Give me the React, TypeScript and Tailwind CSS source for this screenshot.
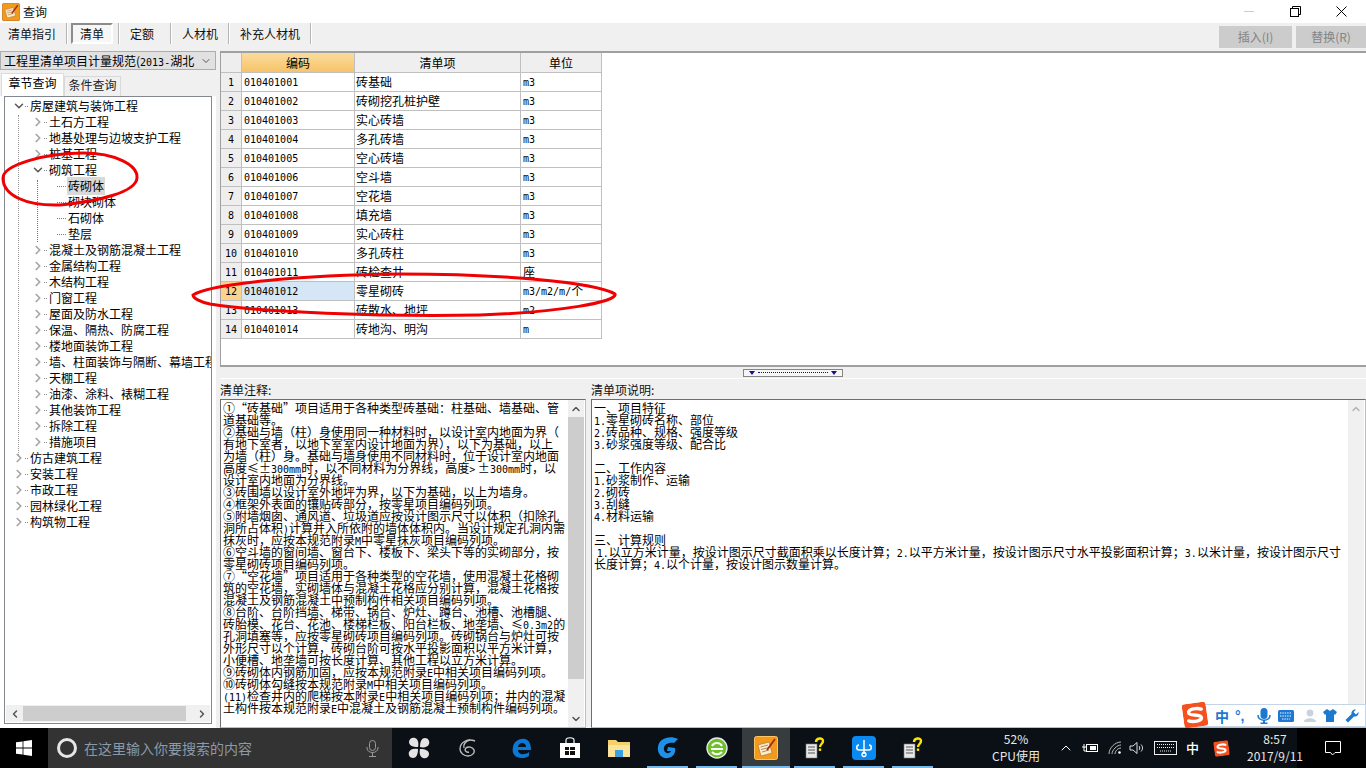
import type { ReactNode } from "react";
import { ChevronDown, ChevronRight, ChevronUp, ChevronLeft } from "lucide-react";

const rows = [
  ["010401001", "砖基础", "m3"],
  ["010401002", "砖砌挖孔桩护壁", "m3"],
  ["010401003", "实心砖墙", "m3"],
  ["010401004", "多孔砖墙", "m3"],
  ["010401005", "空心砖墙", "m3"],
  ["010401006", "空斗墙", "m3"],
  ["010401007", "空花墙", "m3"],
  ["010401008", "填充墙", "m3"],
  ["010401009", "实心砖柱", "m3"],
  ["010401010", "多孔砖柱", "m3"],
  ["010401011", "砖检查井", "座"],
  ["010401012", "零星砌砖", "m3/m2/m/个"],
  ["010401013", "砖散水、地坪", "m2"],
  ["010401014", "砖地沟、明沟", "m"],
];

const notes = [
  "①“砖基础”项目适用于各种类型砖基础：柱基础、墙基础、管",
  "道基础等。",
  "②基础与墙（柱）身使用同一种材料时，以设计室内地面为界（",
  "有地下室者，以地下室室内设计地面为界），以下为基础，以上",
  "为墙（柱）身。基础与墙身使用不同材料时，位于设计室内地面",
  "高度≤±300mm时，以不同材料为分界线，高度> ±300mm时，以",
  "设计室内地面为分界线。",
  "③砖围墙以设计室外地坪为界，以下为基础，以上为墙身。",
  "④框架外表面的镶贴砖部分，按零星项目编码列项。",
  "⑤附墙烟囱、通风道、垃圾道应按设计图示尺寸以体积（扣除孔",
  "洞所占体积)计算并入所依附的墙体体积内。当设计规定孔洞内需",
  "抹灰时，应按本规范附录M中零星抹灰项目编码列项。",
  "⑥空斗墙的窗间墙、窗台下、楼板下、梁头下等的实砌部分，按",
  "零星砌砖项目编码列项。",
  "⑦“空花墙”项目适用于各种类型的空花墙，使用混凝土花格砌",
  "筑的空花墙，实砌墙体与混凝土花格应分别计算，混凝土花格按",
  "混凝土及钢筋混凝土中预制构件相关项目编码列项。",
  "⑧台阶、台阶挡墙、梯带、锅台、炉灶、蹲台、池槽、池槽腿、",
  "砖胎模、花台、花池、楼梯栏板、阳台栏板、地垄墙、≤0.3m2的",
  "孔洞填塞等，应按零星砌砖项目编码列项。砖砌锅台与炉灶可按",
  "外形尺寸以个计算，砖砌台阶可按水平投影面积以平方米计算，",
  "小便槽、地垄墙可按长度计算、其他工程以立方米计算。",
  "⑨砖砌体内钢筋加固，应按本规范附录E中相关项目编码列项。",
  "⑩砖砌体勾缝按本规范附录M中相关项目编码列项。",
  "(11)检查井内的爬梯按本附录E中相关项目编码列项；井内的混凝",
  "土构件按本规范附录E中混凝土及钢筋混凝土预制构件编码列项。",
];

const explain = [
  "一、项目特征",
  "1.零星砌砖名称、部位",
  "2.砖品种、规格、强度等级",
  "3.砂浆强度等级、配合比",
  " ",
  "二、工作内容",
  "1.砂浆制作、运输",
  "2.砌砖",
  "3.刮缝",
  "4.材料运输",
  " ",
  "三、计算规则",
  " 1.以立方米计量，按设计图示尺寸截面积乘以长度计算；2.以平方米计量，按设计图示尺寸水平投影面积计算；3.以米计量，按设计图示尺寸",
  "长度计算；4.以个计量，按设计图示数量计算。",
];

type Node = { t: string; level: number; icon?: "open" | "closed"; leaf?: boolean; sel?: boolean };

const tree: Node[] = [
  { t: "房屋建筑与装饰工程", level: 0, icon: "open" },
  { t: "土石方工程", level: 1, icon: "closed" },
  { t: "地基处理与边坡支护工程", level: 1, icon: "closed" },
  { t: "桩基工程", level: 1, icon: "closed" },
  { t: "砌筑工程", level: 1, icon: "open" },
  { t: "砖砌体", level: 2, leaf: true, sel: true },
  { t: "砌块砌体", level: 2, leaf: true },
  { t: "石砌体", level: 2, leaf: true },
  { t: "垫层", level: 2, leaf: true },
  { t: "混凝土及钢筋混凝土工程", level: 1, icon: "closed" },
  { t: "金属结构工程", level: 1, icon: "closed" },
  { t: "木结构工程", level: 1, icon: "closed" },
  { t: "门窗工程", level: 1, icon: "closed" },
  { t: "屋面及防水工程", level: 1, icon: "closed" },
  { t: "保温、隔热、防腐工程", level: 1, icon: "closed" },
  { t: "楼地面装饰工程", level: 1, icon: "closed" },
  { t: "墙、柱面装饰与隔断、幕墙工程", level: 1, icon: "closed" },
  { t: "天棚工程", level: 1, icon: "closed" },
  { t: "油漆、涂料、裱糊工程", level: 1, icon: "closed" },
  { t: "其他装饰工程", level: 1, icon: "closed" },
  { t: "拆除工程", level: 1, icon: "closed" },
  { t: "措施项目", level: 1, icon: "closed" },
  { t: "仿古建筑工程", level: 0, icon: "closed" },
  { t: "安装工程", level: 0, icon: "closed" },
  { t: "市政工程", level: 0, icon: "closed" },
  { t: "园林绿化工程", level: 0, icon: "closed" },
  { t: "构筑物工程", level: 0, icon: "closed" },
];

// SimSun has half-width latin, so ascii runs get a 6px-wide mono
function Txt({ s }: { s: string }) {
  const parts = s.split(/([\x21-\x7e]+)/);
  return (
    <>
      {parts.map((p, i) =>
        /^[\x21-\x7e]+$/.test(p) ? (
          <span key={i} className="font-['DejaVu_Sans_Mono',monospace] text-[10px]">
            {p}
          </span>
        ) : (
          <span key={i}>{p}</span>
        )
      )}
    </>
  );
}

function TreeRow({ n }: { n: Node }) {
  return (
    <div className="relative flex h-4 items-center whitespace-nowrap text-black">
      <div className={n.level === 0 ? "w-[8px] shrink-0" : n.level === 1 ? "w-[27px] shrink-0" : "w-[52px] shrink-0"} />
      {n.icon === "open" && <ChevronDown size={14} strokeWidth={2.6} className="-mx-[1.5px] shrink-0 text-[#595959]" />}
      {n.icon === "closed" && <ChevronRight size={14} strokeWidth={3} className="-mx-[1.5px] shrink-0 text-[#a6a6a6]" />}
      {n.leaf && <div className="w-[5px] shrink-0 border-b border-dotted border-[#777]" />}
      <div className="ml-[1px] mr-[1px] w-[3px] shrink-0 border-b border-dotted border-[#888]" />
      <span className={n.sel ? "bg-[#d9d9d9] px-[1px]" : "px-[1px]"}>{n.t}</span>
    </div>
  );
}

function Sep() {
  return <div className="h-[21px] w-[2px] shrink-0 border-l border-r border-l-[#b5b5b5] border-r-white" />;
}

function App() {
  return (
    <div className="relative flex h-[768px] w-[1366px] flex-col overflow-hidden bg-[#f0f0f0] font-['Noto_Sans_CJK_SC',sans-serif] text-[12px] text-black">
      {/* title bar */}
      <div className="flex h-[23px] shrink-0 items-center bg-white pl-[2px] pr-[2px]">
        <svg width="18" height="18" viewBox="0 0 24 24" className="shrink-0">
          <rect x="0.5" y="0.5" width="23" height="23" rx="2" fill="#f29a1c" stroke="#c86a10" />
          <path d="M4 9 L15 6 L18 17 L7 20 Z" fill="#fbeecd" stroke="#a86a30" strokeWidth="0.6" />
          <path d="M6.5 11 L14 9 M7 13.5 L15 11.5 M8 16 L15 14" stroke="#a05a30" strokeWidth="0.7" />
          <path d="M21 3 L13 14" stroke="#a82a10" strokeWidth="1.8" />
        </svg>
        <span className="ml-[3px] text-[#111]">查询</span>
        <div className="flex-1" />
        <div className="flex h-[23px] w-[46px] items-center justify-center">
          <div className="h-[1px] w-[10px] bg-[#ccc]" />
        </div>
        <div className="flex h-[23px] w-[46px] items-center justify-center">
          <svg width="11" height="11" viewBox="0 0 11 11" fill="none" stroke="#000">
            <rect x="0.5" y="2.5" width="8" height="8" fill="#fff" />
            <path d="M2.5 2.5 V0.5 H10.5 V8.5 H8.5" />
          </svg>
        </div>
        <div className="flex h-[23px] w-[46px] items-center justify-center">
          <svg width="11" height="11" viewBox="0 0 11 11" stroke="#000" strokeWidth="1">
            <path d="M0.5 0.5 L10.5 10.5 M10.5 0.5 L0.5 10.5" />
          </svg>
        </div>
      </div>

      {/* toolbar */}
      <div className="flex h-[25px] shrink-0 justify-between pl-[1px] text-[#111]">
        <div className="flex h-[22px] items-center pb-[1px]">
          <div className="flex h-[21px] w-[65px] items-center pl-[7px]">清单指引</div>
          <Sep />
          <div className="ml-[3px] mr-[5px] flex h-[21px] w-[42px] items-center justify-center border-2 border-[#8c8c8c] border-r-white border-b-white bg-[#f6f6f6]">清单</div>
          <Sep />
          <div className="flex h-[21px] w-[50px] items-center justify-center pr-[6px]">定额</div>
          <Sep />
          <div className="flex h-[21px] w-[56px] items-center justify-center">人材机</div>
          <Sep />
          <div className="flex h-[21px] w-[80px] items-center justify-center">补充人材机</div>
          <Sep />
        </div>
        <div className="flex items-end gap-[4px]">
          <div className="flex h-[22px] w-[73px] items-center justify-center bg-[#cccccc] pb-[1px] text-[#838383]">插入(I)</div>
          <div className="flex h-[22px] w-[70px] items-center justify-center bg-[#cccccc] pb-[1px] text-[#838383]">替换(R)</div>
        </div>
      </div>

      {/* body */}
      <div className="flex min-h-0 flex-1 pt-[3px]">
        {/* left panel */}
        <div className="flex w-[216px] shrink-0 flex-col">
          <div className="flex h-[19px] shrink-0 items-center justify-between border border-[#adadad] bg-[#e1e1e1] pl-[3px] pr-[3px]">
            <span className="whitespace-nowrap">
              工程里清单项目计量规范(<Txt s="2013-" />湖北
            </span>
            <ChevronDown size={12} className="text-[#555]" />
          </div>
          <div className="mt-[3px] flex h-[23px] shrink-0 items-end pl-[1px]">
            <div className="flex h-[23px] w-[63px] items-center justify-center border border-b-0 border-[#dcdcdc] bg-white pb-[5px]">章节查询</div>
            <div className="flex h-[20px] w-[57px] items-center justify-center border border-b-0 border-[#d9d9d9] bg-[#f0f0f0] pb-[4px] text-[#222]">条件查询</div>
          </div>
          <div className="flex min-h-0 flex-1 flex-col bg-white pb-[4px] pl-[4px] pr-[4px]">
            <div className="relative flex min-h-0 flex-1 flex-col border border-[#828790] bg-white">
              {/* dotted tree guides */}
              <div className="absolute left-[13px] top-[18px] h-[340px] border-l border-dotted border-[#999]" />
              <div className="absolute left-[32px] top-[83px] h-[62px] border-l border-dotted border-[#777]" />
              <div className="relative min-h-0 flex-1 overflow-hidden pt-[1px]">
                {tree.map((n) => (
                  <TreeRow key={n.t} n={n} />
                ))}
              </div>
              <div className="relative m-[1px] flex h-[17px] shrink-0 items-center bg-[#f0f0f0]">
                <div className="flex w-[17px] justify-center">
                  <ChevronLeft size={12} strokeWidth={3} className="text-[#555]" />
                </div>
                <div className="h-[15px] w-[163px] bg-[#cdcdcd]" />
                <div className="flex-1" />
                <div className="flex w-[17px] justify-center">
                  <ChevronRight size={12} strokeWidth={3} className="text-[#555]" />
                </div>
              </div>
            </div>
          </div>
        </div>

        {/* right side */}
        <div className="ml-[4px] flex min-w-0 flex-1 flex-col">
          <div className="h-[316px] shrink-0 border-b-2 border-l border-t border-[#a0a0a0] bg-white">
            <div className="grid grid-cols-[21px_113px_166px_81px] border-t border-[#a0a0a0]">
              <div className="h-[20px] border-r border-b border-[#c0c0c0] bg-[#eeeeee]" />
              <div className="flex h-[20px] items-center justify-center border-r border-b border-[#c0c0c0] bg-gradient-to-b from-[#fbdc9d] to-[#f6c368]">编码</div>
              <div className="flex h-[20px] items-center justify-center border-r border-b border-[#c0c0c0] bg-[#efefef]">清单项</div>
              <div className="flex h-[20px] items-center justify-center border-r border-b border-[#c0c0c0] bg-[#efefef]">单位</div>
              {rows.map((r, i) => {
                const sel = i === 11;
                return (
                  <div key={r[0]} className="contents">
                    <div className={sel ? "flex h-[19px] items-center justify-center border-r border-b border-[#c0c0c0] bg-[#fdd28e]" : "flex h-[19px] items-center justify-center border-r border-b border-[#c0c0c0] bg-[#eeeeee]"}>
                      <Txt s={String(i + 1)} />
                    </div>
                    <div className={sel ? "flex h-[19px] items-center border-r border-b border-[#c0c0c0] bg-[#d5e7f7] pl-[2px]" : "flex h-[19px] items-center border-r border-b border-[#c0c0c0] pl-[2px]"}>
                      <Txt s={r[0]} />
                    </div>
                    <div className="flex h-[19px] items-center border-r border-b border-[#c0c0c0] pl-[1px]">{r[1]}</div>
                    <div className="flex h-[19px] items-center whitespace-nowrap border-r border-b border-[#c0c0c0] pl-[2px]">
                      <Txt s={r[2]} />
                    </div>
                  </div>
                );
              })}
            </div>
          </div>

          {/* splitter */}
          <div className="flex h-[12px] shrink-0 items-center justify-center border-b border-white">
            <div className="flex h-[8px] w-[100px] items-center justify-center gap-[1px] border border-[#858585] bg-[#f6f6f6]">
              <div className="h-0 w-0 border-x-[3px] border-t-[4px] border-x-transparent border-t-[#12128c]" />
              <div className="mx-[2px] w-[70px] border-b border-dotted border-[#12128c]" />
              <div className="h-0 w-0 border-x-[3px] border-t-[4px] border-x-transparent border-t-[#12128c]" />
            </div>
          </div>

          {/* bottom panes */}
          <div className="flex min-h-0 flex-1 gap-[5px]">
            <div className="flex w-[366px] shrink-0 flex-col">
              <div className="flex h-[20px] shrink-0 items-center pt-[2px] text-[#111]">
                清单注释:
              </div>
              <div className="flex min-h-0 flex-1 border border-[#6f6f6f] border-r-[#bdbdbd] border-b-[#bdbdbd] bg-white">
                <div className="min-w-0 flex-1 overflow-hidden pl-[2px] pt-[2px] leading-[12px] text-black">
                  {notes.map((l, i) => (
                    <div key={i} className="h-[12px] whitespace-pre">
                      <Txt s={l} />
                    </div>
                  ))}
                </div>
                <div className="mr-[1px] flex w-[16px] shrink-0 flex-col bg-[#f0f0f0]">
                  <div className="flex h-[17px] shrink-0 items-center justify-center">
                    <ChevronUp size={12} strokeWidth={3} className="text-[#555]" />
                  </div>
                  <div className="h-[262px] bg-[#cdcdcd]" />
                  <div className="flex-1" />
                  <div className="flex h-[17px] shrink-0 items-center justify-center">
                    <ChevronDown size={12} strokeWidth={3} className="text-[#555]" />
                  </div>
                </div>
              </div>
            </div>
            <div className="flex min-w-0 flex-1 flex-col">
              <div className="flex h-[20px] shrink-0 items-center pt-[2px] text-[#111]">
                清单项说明:
              </div>
              <div className="flex min-h-0 flex-1 border border-[#6f6f6f] border-r-[#bdbdbd] border-b-[#bdbdbd] bg-white">
                <div className="min-w-0 flex-1 overflow-hidden pl-[2px] pt-[2px] leading-[12px] text-black">
                  {explain.map((l, i) => (
                    <div key={i} className="h-[12px] whitespace-pre">
                      <Txt s={l} />
                    </div>
                  ))}
                </div>
                <div className="mr-[1px] flex w-[16px] shrink-0 justify-center bg-[#f0f0f0] pt-[3px]">
                  <ChevronUp size={12} strokeWidth={3} className="text-[#b5b5b5]" />
                </div>
              </div>
            </div>
          </div>
        </div>
      </div>

      {/* taskbar */}
      <div className="flex h-[40px] shrink-0 items-stretch bg-[#0a1015] text-white">
        <div className="flex w-[48px] shrink-0 items-center justify-center bg-black">
          <svg width="16" height="16" viewBox="0 0 16 16" fill="#fff">
            <path d="M0 2.3 L6.6 1.4 V7.5 H0 Z M7.4 1.3 L16 0 V7.5 H7.4 Z M0 8.4 H6.6 V14.6 L0 13.7 Z M7.4 8.4 H16 V16 L7.4 14.7 Z" />
          </svg>
        </div>
        <div className="flex w-[344px] shrink-0 items-center bg-[#333333] pl-[9px] pr-[13px]">
          <div className="h-[20px] w-[20px] shrink-0 rounded-full border-[3px] border-[#e6e6e6]" />
          <span className="ml-[7px] flex-1 text-[14px] text-[#8a9aa8]">在这里输入你要搜索的内容</span>
          <svg width="13" height="17" viewBox="0 0 13 17" fill="none" stroke="#9a9a9a">
            <rect x="3.5" y="0.5" width="6" height="10" rx="3" />
            <path d="M1 7 V8 C1 14 12 14 12 8 V7 M6.5 12.5 V16 M3 16.5 H10" />
          </svg>
        </div>
        <div className="w-[2px] shrink-0" />
        <TaskIcon>
          <svg width="22" height="22" viewBox="0 0 22 22" fill="#e4e4e4">
            <path d="M10 10 C4 10 1 8 1 5 C1 2 4 0 7 1 C10 2 11 6 10 10 Z" />
            <path d="M12 10 C12 4 14 1 17 1 C20 1 22 4 21 7 C20 10 16 11 12 10 Z" />
            <path d="M12 12 C18 12 21 14 21 17 C21 20 18 22 15 21 C12 20 11 16 12 12 Z" />
            <path d="M10 12 C10 18 8 21 5 21 C2 21 0 18 1 15 C2 12 6 11 10 12 Z" />
          </svg>
        </TaskIcon>
        <TaskIcon>
          <svg width="20" height="20" viewBox="0 0 20 20" fill="none" stroke="#bdbdbd" strokeWidth="1.4">
            <path d="M17 3 C10 0 2 4 2 11 C2 15 6 18 10 18 C14 18 17 15 16 12 C15 9 10 8 8 10 C6 12 8 15 11 14" />
            <path d="M12 2 C7 3 5 7 6 10" />
          </svg>
        </TaskIcon>
        <div className="w-[5px] shrink-0" />
        <div className="relative flex w-[48px] shrink-0 items-center justify-center">
          <svg width="21" height="21" viewBox="0 0 21 21" fill="none">
            <path d="M2 9 C3 3 9 0 14 1 C18 2 20 6 20 12 H7 C7 15 10 17 13 16 C15 16 17 15 18 14 V18 C15 20 10 21 6 19 C2 17 1 13 2 9 Z M7 9 H15 C15 6 13 5 11 5 C9 5 7 7 7 9 Z" fill="#0a78d7" />
          </svg>
        </div>
        <TaskIcon>
          <svg width="22" height="24" viewBox="0 0 22 24" fill="none">
            <path d="M1 7 H21 V22 H1 Z" fill="#fff" />
            <path d="M7 7 V4 C7 1 15 1 15 4 V7" stroke="#fff" strokeWidth="1.2" />
            <path d="M6 11 H10 V14 H6 Z M11 11 H16 V14 H11 Z M6 15 H10 V19 H6 Z M11 15 H16 V19 H11 Z" fill="#111" />
          </svg>
        </TaskIcon>
        <TaskIcon>
          <svg width="22" height="20" viewBox="0 0 22 20">
            <path d="M0 2 H8 L10 4 H22 V19 H0 Z" fill="#f4cf6e" />
            <path d="M0 7 H22 V19 H0 Z" fill="#fbe39a" />
            <path d="M7 12 H15 V19 H7 Z" fill="#3aa0e0" />
          </svg>
        </TaskIcon>
        <TaskIcon under>
          <svg width="24" height="24" viewBox="0 0 24 24" fill="none">
            <path d="M22 3 C14 -1 3 2 2 11 C1 18 6 23 12 22 C18 21 20 16 19 12 L12 11 L11 15 L15 15 C14 18 9 18 8 14 C7 9 12 6 18 7 Z" fill="#1e90e8" />
          </svg>
        </TaskIcon>
        <TaskIcon under>
          <svg width="24" height="24" viewBox="0 0 24 24">
            <circle cx="12" cy="12" r="10" fill="#6ec02a" stroke="#e8e8e8" strokeWidth="1.4" />
            <path d="M6 13 H18 M7 10 C9 6 15 6 17 10" stroke="#fff" strokeWidth="2" fill="none" />
            <path d="M7 16 C10 19 14 19 17 16" stroke="#fff" strokeWidth="2" fill="none" />
          </svg>
        </TaskIcon>
        <div className="w-[1px] shrink-0" />
        <TaskIcon active>
          <svg width="24" height="24" viewBox="0 0 24 24">
            <rect x="0.5" y="0.5" width="23" height="23" rx="2" fill="#f29a1c" stroke="#ffc460" />
            <path d="M4 9 L15 6 L18 17 L7 20 Z" fill="#fbeecd" stroke="#a86a30" strokeWidth="0.6" />
            <path d="M6.5 11 L14 9 M7 13.5 L15 11.5 M8 16 L15 14" stroke="#a05a30" strokeWidth="0.7" />
            <path d="M21 3 L13 14" stroke="#a82a10" strokeWidth="1.8" />
          </svg>
        </TaskIcon>
        <TaskIcon under>
          <HelpDoc />
        </TaskIcon>
        <TaskIcon under>
          <svg width="24" height="24" viewBox="0 0 24 24" fill="none">
            <rect width="24" height="24" rx="4" fill="#0a8af0" />
            <path d="M12 4 V18 M7 9 C4 9 4 14 7 14 H17 C20 14 20 9 17 9" stroke="#fff" strokeWidth="1.5" />
            <circle cx="12" cy="18.5" r="2" stroke="#fff" strokeWidth="1.3" />
          </svg>
        </TaskIcon>
        <TaskIcon under>
          <HelpDoc />
        </TaskIcon>
        <div className="w-[43px] shrink-0" />
        <div className="flex w-[72px] shrink-0 flex-col items-center justify-center pb-[2px] text-[12px] leading-[17px] text-[#e8e8e8]">
          <span>52%</span>
          <span>CPU使用</span>
        </div>
        {/* tray */}
        <div className="ml-[6px] flex w-[172px] shrink-0 items-center">
          <ChevronUp size={16} strokeWidth={1.5} className="shrink-0 text-white" />
          <svg width="16" height="12" viewBox="0 0 16 12" fill="none" stroke="#fff" className="ml-[8px] shrink-0">
            <rect x="4.5" y="2.5" width="11" height="7" />
            <rect x="8" y="4" width="6" height="4" fill="#fff" stroke="none" />
            <path d="M2 2 V5 M0 5 H4 M2 5 V9 H4" />
          </svg>
          <svg width="14" height="14" viewBox="0 0 14 14" fill="none" stroke="#bbb" strokeWidth="1" className="ml-[10px] shrink-0">
            <path d="M1 13 C1 7 7 1 13 1 M4 13 C4 9 9 4 13 4 M7 13 C7 10 10 7 13 7" />
            <circle cx="11.5" cy="11.5" r="1.3" fill="#fff" stroke="none" />
          </svg>
          <svg width="16" height="14" viewBox="0 0 16 14" fill="none" stroke="#ddd" className="ml-[7px] shrink-0">
            <path d="M1 5 H4 L8 1.5 V12.5 L4 9 H1 Z" />
            <path d="M10 5 C11 6 11 8 10 9 M12 3.5 C14 5.5 14 8.5 12 10.5" />
          </svg>
          <svg width="23" height="14" viewBox="0 0 23 14" fill="none" stroke="#eee" className="ml-[9px] shrink-0">
            <rect x="0.5" y="0.5" width="22" height="13" />
            <path d="M3 3.5 H20 M3 6.5 H20 M6 10 H17" strokeDasharray="1 1" />
          </svg>
          <span className="ml-[9px] w-[14px] shrink-0 text-[13px] font-medium">中</span>
          <div className="ml-[14px] shrink-0 rotate-[-8deg]">
            <SogouMark size={15} />
          </div>
        </div>
        <div className="relative z-10 w-[67px] shrink-0">
          <div className="flex h-full w-[90px] flex-col items-center justify-center pb-[3px] text-[12px] leading-[17px] text-[#e8e8e8]">
            <span>8:57</span>
            <span>2017/9/11</span>
          </div>
        </div>
        <div className="flex flex-1 items-center justify-center bg-black pl-[3px]">
          <svg width="16" height="15" viewBox="0 0 16 15" fill="none" stroke="#fff">
            <path d="M0.5 0.5 H15.5 V11.5 H10 L7.5 14 L5.5 11.5 H0.5 Z" />
          </svg>
        </div>
      </div>

      {/* sogou ime bar, floats over the right pane */}
      <div className="absolute left-[1193px] top-[704px] flex h-[23px] w-[173px] items-center border border-[#c5d5e5] bg-white pl-[21px] text-[14px] font-bold text-[#1c78d0]">
        <span className="w-[14px] shrink-0 leading-none">中</span>
        <span className="ml-[6px] w-[12px] shrink-0 font-['Liberation_Sans',sans-serif] leading-none">°,</span>
        <svg width="14" height="16" viewBox="0 0 14 16" fill="#1c78d0" className="ml-[10px] shrink-0">
          <rect x="3.5" y="0" width="7" height="11" rx="3.5" />
          <path d="M1 7 C1 14 13 14 13 7" fill="none" stroke="#1c78d0" strokeWidth="1.6" />
          <rect x="6" y="12" width="2" height="3" />
          <rect x="3.5" y="14.5" width="7" height="1.5" />
        </svg>
        <svg width="16" height="12" viewBox="0 0 16 12" className="ml-[7px] shrink-0">
          <rect width="16" height="12" rx="1.5" fill="#1c78d0" />
          <path d="M2 3 H14 M2 6 H14 M4 9 H12" stroke="#fff" strokeDasharray="1.4 1" />
        </svg>
        <svg width="16" height="14" viewBox="0 0 16 14" fill="#c8d3dd" className="ml-[9px] shrink-0">
          <circle cx="7" cy="4" r="3.4" />
          <path d="M1 13 C1 8 13 8 13 13 Z" />
        </svg>
        <svg width="14" height="13" viewBox="0 0 14 13" fill="#1c78d0" className="ml-[4px] shrink-0">
          <path d="M4 0 L7 2 L10 0 L14 3 L12 6 L11 5 V13 H3 V5 L2 6 L0 3 Z" />
        </svg>
        <svg width="14" height="14" viewBox="0 0 14 14" fill="#1c78d0" className="ml-[8px] shrink-0">
          <path d="M13.5 3 L11 5.5 L8.5 3 L11 0.5 C8.5 0 6 2 6.5 5 L0.5 11 L3 13.5 L9 7.5 C12 8 14 5.5 13.5 3 Z" />
        </svg>
      </div>
      <div className="absolute left-[1183px] top-[703px] rotate-[-8deg]">
        <SogouMark size={24} />
      </div>

      {/* red hand-drawn marks from the screenshot */}
      <svg className="pointer-events-none absolute left-0 top-0" width="1366" height="768" fill="none" stroke="#f00000" strokeWidth="3">
        <path d="M83 153 C115 153 138 165 137 178 C136 192 100 201 60 205 C25 206 3 195 3 178 C3 165 45 153 83 153 Z" />
        <path d="M193 295 C210 284 300 275 400 274 C500 274 595 282 615 294 C618 302 560 312 480 315 C380 317 260 312 210 304 C200 302 193 298 193 295 Z" />
      </svg>
    </div>
  );
}

function TaskIcon({ children, under, active }: { children: ReactNode; under?: boolean; active?: boolean }) {
  return (
    <div className={active ? "relative flex w-[48px] shrink-0 items-center justify-center bg-[#373c3f]" : "relative flex w-[49px] shrink-0 items-center justify-center"}>
      {children}
      {(under || active) && <div className={active ? "absolute bottom-0 left-0 right-0 h-[2px] bg-[#76b9ed]" : "absolute bottom-0 left-[4px] right-[4px] h-[2px] bg-[#76b9ed]"} />}
    </div>
  );
}

function HelpDoc() {
  return (
    <svg width="20" height="22" viewBox="0 0 20 22">
      <rect x="1" y="7" width="11" height="14" fill="#e8e8e8" stroke="#777" strokeWidth="0.6" />
      <path d="M3 10 H10 M3 13 H10 M3 16 H10" stroke="#555" />
      <path d="M11 5 C11 1 18 0 18 4 C18 7 15 7 15 10" stroke="#ffe600" strokeWidth="2.4" fill="none" />
      <rect x="13.8" y="11.5" width="2.4" height="2.4" fill="#ffe600" />
    </svg>
  );
}

function SogouMark({ size }: { size: number }) {
  return (
    <svg width={size} height={size} viewBox="0 0 24 24">
      <rect width="24" height="24" rx="3" fill="#f4511e" />
      <path d="M19 7 C15 5 6 5 6 9 C6 13 18 11 18 15.5 C18 19 9 19 5 17" fill="none" stroke="#fff" strokeWidth="3.4" strokeLinecap="round" />
    </svg>
  );
}

export default App;
